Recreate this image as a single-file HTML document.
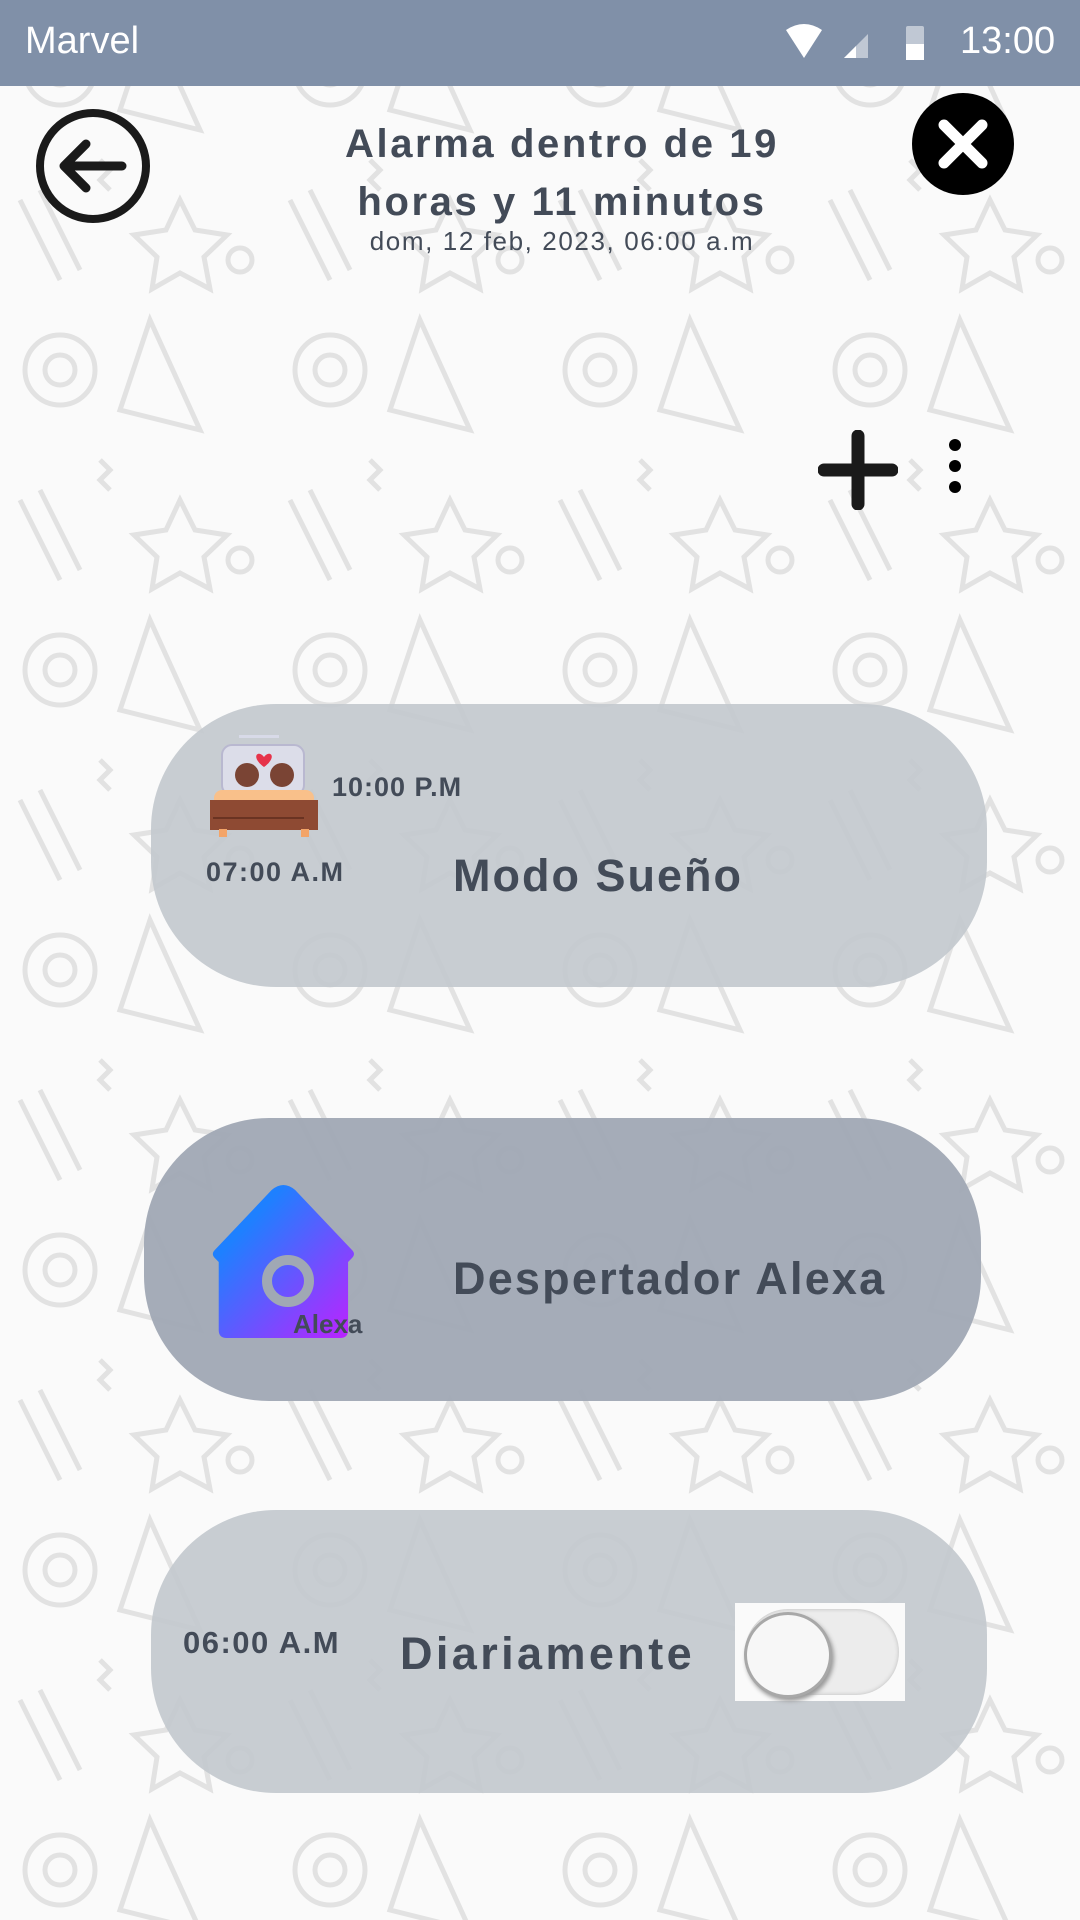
<!DOCTYPE html>
<html><head><meta charset="utf-8"><style>
*{margin:0;padding:0;box-sizing:border-box}
body{width:1080px;height:1920px;overflow:hidden;position:relative;background:#fafafa;font-family:"Liberation Sans",sans-serif;color:#434b58}
.abs{position:absolute}
.sb{left:0;top:0;width:1080px;height:86px;background:#8090a8;color:#fff}
.card{position:absolute;border-radius:125px}
.t{position:absolute;white-space:nowrap;font-weight:bold}
</style></head><body>
<svg class="abs" style="left:0;top:0" width="1080" height="1920">
<defs><pattern id="p" width="270" height="300" patternUnits="userSpaceOnUse">
<g fill="none" stroke="#e2e2e2" stroke-width="5">
<circle cx="60" cy="70" r="35"/><circle cx="60" cy="70" r="15"/>
<path d="M150 20 L200 130 L120 110 Z"/><path d="M20 200 L60 280 M40 190 L80 270"/>
<path d="M180 200 l15 30 32 5 -23 22 6 32 -30 -16 -28 16 5 -32 -23 -22 32 -5z"/>
<circle cx="240" cy="260" r="12"/><path d="M100 160 l10 10 -10 10 10 10"/>
</g></pattern></defs>
<rect x="0" y="86" width="1080" height="1834" fill="url(#p)"/>
</svg>
<div class="abs sb">
<div class="abs" style="left:25px;top:20px;font-size:38px">Marvel</div>
<svg class="abs" style="left:784px;top:24px" width="140" height="40">
<path d="M2 6 Q20 -6 38 6 L20 34 Z" fill="#fff"/>
<path d="M60 34 L84 10 L84 34 Z" fill="#c0c8d4"/><path d="M60 34 L72 22 L72 34Z" fill="#fff"/>
<rect x="122" y="2" width="18" height="34" rx="2" fill="#c0c8d4"/><rect x="122" y="20" width="18" height="16" fill="#fff"/>
</svg>
<div class="abs" style="left:960px;top:20px;font-size:38px">13:00</div>
</div>
<svg class="abs" style="left:34px;top:107px" width="120" height="120"><circle cx="59" cy="59" r="53" fill="none" stroke="#1a1a1a" stroke-width="8"/>
<path d="M88 59 H32 M52 37 L30 59 L52 81" fill="none" stroke="#1a1a1a" stroke-width="9" stroke-linecap="round" stroke-linejoin="round"/></svg>
<svg class="abs" style="left:911px;top:92px" width="104" height="104"><circle cx="52" cy="52" r="51" fill="#000"/>
<path d="M33 33 L71 71 M71 33 L33 71" stroke="#fff" stroke-width="11" stroke-linecap="round"/></svg>
<div class="t" style="left:0;width:1124px;text-align:center;top:115px;font-size:40px;line-height:58px;letter-spacing:2.6px">Alarma dentro de 19<br>horas y 11 minutos</div>
<div class="abs" style="left:0;width:1124px;text-align:center;top:226px;font-size:26px;letter-spacing:1.6px">dom, 12 feb, 2023, 06:00 a.m</div>
<svg class="abs" style="left:818px;top:430px" width="80" height="80"><path d="M40 6 V74 M6 40 H74" stroke="#1a1a1a" stroke-width="13" stroke-linecap="round"/></svg>
<svg class="abs" style="left:944px;top:436px" width="24" height="62"><circle cx="11" cy="9" r="6" fill="#000"/><circle cx="11" cy="30" r="6" fill="#000"/><circle cx="11" cy="51" r="6" fill="#000"/></svg>

<div class="card" style="left:151px;top:704px;width:836px;height:283px;background:rgba(196,201,207,.93)"></div>
<svg class="abs" style="left:209px;top:735px" width="110" height="102">
<rect x="30" y="0" width="40" height="3" fill="#d8dae8"/>
<rect x="13" y="10" width="82" height="50" rx="10" fill="#dcdde9" stroke="#b9b8d0" stroke-width="2"/>
<circle cx="38" cy="40" r="12" fill="#7a4434"/><circle cx="73" cy="40" r="12" fill="#7a4434"/>
<path d="M55 22 c-6 -8 -14 0 0 10 c14 -10 6 -18 0 -10z" fill="#e6334a"/>
<rect x="5" y="55" width="100" height="18" rx="8" fill="#f9c08a"/>
<rect x="1" y="65" width="108" height="30" fill="#8e4a33"/><path d="M4 83 H95" stroke="#6a3322" stroke-width="2"/>
<rect x="10" y="94" width="8" height="8" fill="#f3a468"/><rect x="92" y="94" width="8" height="8" fill="#f3a468"/>
</svg>
<div class="t" style="left:332px;top:772px;font-size:27px;letter-spacing:1px">10:00 P.M</div>
<div class="t" style="left:206px;top:857px;font-size:27px;letter-spacing:1.5px">07:00 A.M</div>
<div class="t" style="left:453px;top:850px;font-size:45px;letter-spacing:2px">Modo Sueño</div>

<div class="card" style="left:144px;top:1118px;width:837px;height:283px;background:rgba(160,168,180,.95)"></div>
<svg class="abs" style="left:208px;top:1180px" width="160" height="160">
<defs><linearGradient id="g" x1="0" y1="0" x2="1" y2="1"><stop offset="0.25" stop-color="#1e80ff"/><stop offset="1" stop-color="#c020ff"/></linearGradient></defs>
<path d="M14 82 L10 78 Q6 74 10 70 L68 10 Q80 0 92 10 L150 70 Q154 74 150 78 L146 82 V150 Q146 158 138 158 H22 Q14 158 14 150 Z" transform="translate(-3,0) scale(0.98,1)" fill="url(#g)"/>
<circle cx="80" cy="101" r="21" fill="none" stroke="#a0a8b4" stroke-width="10"/>
</svg>
<div class="t" style="left:293px;top:1309px;font-size:26px">Alexa</div>
<div class="t" style="left:453px;top:1253px;font-size:45px;letter-spacing:2.2px">Despertador Alexa</div>

<div class="card" style="left:151px;top:1510px;width:836px;height:283px;background:rgba(196,201,207,.93)"></div>
<div class="t" style="left:183px;top:1625px;font-size:31px;letter-spacing:1.5px">06:00 A.M</div>
<div class="t" style="left:400px;top:1628px;font-size:45px;letter-spacing:3.4px">Diariamente</div>
<div class="abs" style="left:735px;top:1603px;width:170px;height:98px;background:#fafafa">
<div class="abs" style="left:10px;top:6px;width:154px;height:86px;border-radius:43px;background:#ececec;box-shadow:inset 0 0 4px #bbb"></div>
<div class="abs" style="left:9px;top:9px;width:88px;height:86px;border-radius:50%;background:#f7f7f7;border:3px solid #a8a8a8;box-shadow:2px 3px 4px #999"></div>
</div>
</body></html>
